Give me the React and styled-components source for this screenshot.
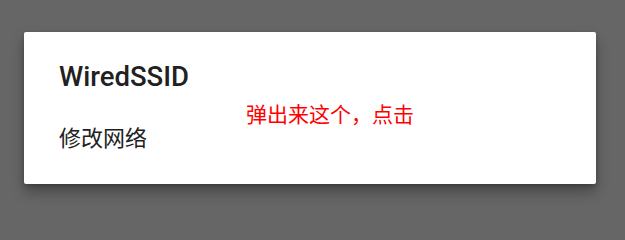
import React from 'react';
import styled, { createGlobalStyle } from 'styled-components';

const GlobalStyle = createGlobalStyle`
  html, body {
    margin: 0;
    padding: 0;
    background: #666666;
  }
  body {
    font-family: Roboto, "Noto Sans CJK SC", sans-serif;
  }
`;

// 어두운 배경 위에 다이얼로그가 떠 있는 화면
const Screen = styled.div`
  width: 625px;
  height: 240px;
  padding: 32px 29px 0 24px;
  box-sizing: border-box;
  background: #666666;
`;

const Dialog = styled.div`
  position: relative;
  height: 152px;
  background: #ffffff;
  border-radius: 2px;
  box-shadow: 0 8px 14px rgba(0, 0, 0, 0.3), 0 2px 4px rgba(0, 0, 0, 0.2);
  padding: 28px 0 0 35px;
  box-sizing: border-box;
`;

const Title = styled.h2`
  margin: 0;
  font-family: Roboto, "Noto Sans CJK SC", sans-serif;
  font-size: 27.5px;
  font-weight: 500;
  line-height: 34px;
  color: #212121;
`;

const MenuItem = styled.div`
  margin-top: 27px;
  font-family: "Noto Sans CJK SC", sans-serif;
  font-size: 22px;
  line-height: 30px;
  color: #212121;
`;

// 스크린샷에 덧붙인 빨간 메모
const Note = styled.span`
  position: absolute;
  left: 222px;
  top: 69px;
  font-family: "Noto Sans CJK SC", sans-serif;
  font-size: 21px;
  line-height: 24px;
  color: #ff0000;
`;

export default function App() {
  return (
    <>
      <GlobalStyle />
      <Screen>
        <Dialog>
          <Title>WiredSSID</Title>
          <MenuItem>修改网络</MenuItem>
          <Note>弹出来这个，点击</Note>
        </Dialog>
      </Screen>
    </>
  );
}
